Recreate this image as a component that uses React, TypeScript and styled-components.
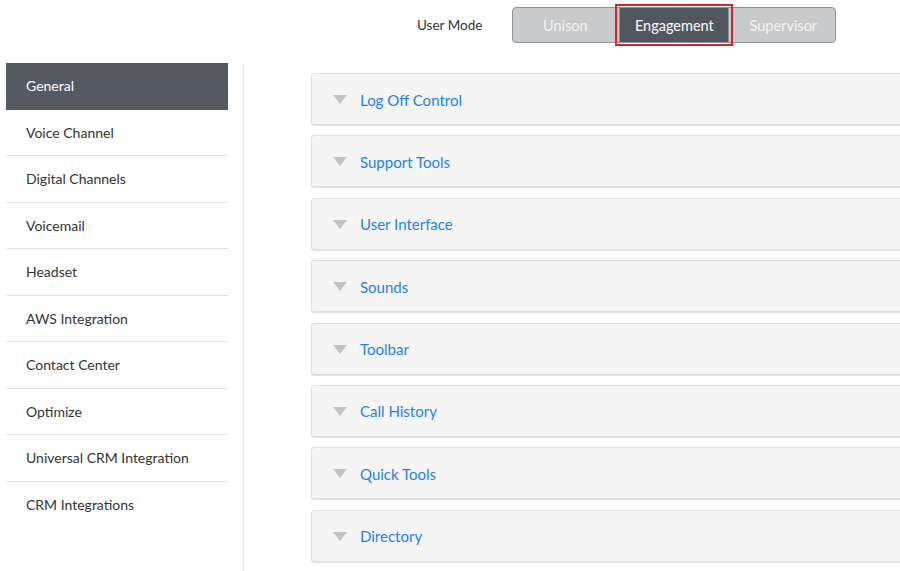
import React from 'react';
import styled, { createGlobalStyle } from 'styled-components';

const GlobalStyle = createGlobalStyle`
  html, body {
    margin: 0;
    padding: 0;
    background: #ffffff;
    overflow: hidden;
  }
  body {
    font-family: Lato, "Open Sans", "Liberation Sans", sans-serif;
  }
`;

const StyledPage = styled.div`
  width: 900px;
  height: 571px;
  overflow: hidden;
  display: flex;
  flex-direction: column;
`;
const StyledHeader = styled.div`
  height: 63px;
  box-sizing: border-box;
  padding: 7px 0 0 417px;
  display: flex;
  align-items: flex-start;
`;
const StyledModeLabel = styled.span`
  font-size: 13.5px;
  line-height: 36px;
  color: #333333;
  margin-right: 30px;
`;
const StyledSegments = styled.div`
  display: flex;
  height: 36px;
  border: 1px solid #8f9499;
  border-radius: 4px;
  box-sizing: border-box;
  background: #c9cacb;
`;
const StyledSegment = styled.button<{ $active?: boolean }>`
  position: relative;
  width: ${(p) => (p.$active ? '110px' : '104px')};
  border: none;
  margin: 0 1px;
  padding: 0;
  font-family: inherit;
  font-size: 14.5px;
  color: ${(p) => (p.$active ? '#ffffff' : '#f4f4f4')};
  background: ${(p) => (p.$active ? '#51575e' : 'transparent')};
  border-left: ${(p) => (p.$active ? '1px solid #8f9499' : 'none')};
  border-right: ${(p) => (p.$active ? '1px solid #8f9499' : 'none')};
  outline: ${(p) => (p.$active ? '2px solid #d62229' : 'none')};
  outline-offset: 2px;
  &:first-child {
    margin-left: 0;
    border-radius: 3px 0 0 3px;
  }
  &:last-child {
    margin-right: 0;
    border-radius: 0 3px 3px 0;
  }
`;
const StyledBody = styled.div`
  flex: 1;
  display: flex;
  min-height: 0;
`;
const StyledSidebar = styled.div`
  width: 244px;
  flex: none;
  box-sizing: border-box;
  padding-left: 6px;
  border-right: 1px solid #e6e6e6;
`;
const StyledNav = styled.ul`
  list-style: none;
  margin: 0;
  padding: 0;
  width: 222px;
`;
const StyledNavItem = styled.li<{ $active?: boolean }>`
  height: 46.5px;
  box-sizing: border-box;
  display: flex;
  align-items: center;
  padding-left: 20px;
  font-size: 14px;
  color: ${(p) => (p.$active ? '#ffffff' : '#333333')};
  background: ${(p) => (p.$active ? '#545a61' : 'transparent')};
  border-bottom: 1px solid ${(p) => (p.$active ? 'transparent' : '#e3e3e3')};
  &:last-child {
    border-bottom: none;
  }
`;
const StyledContent = styled.div`
  flex: 1;
  padding: 10px 0 0 67px;
  display: flex;
  flex-direction: column;
  gap: 10.4px;
`;
const StyledPanel = styled.div`
  width: 700px;
  height: 52px;
  flex: none;
  box-sizing: border-box;
  display: flex;
  align-items: center;
  padding-left: 21px;
  padding-top: 1px;
  background: #f5f5f5;
  border: 1px solid #dddddd;
  border-radius: 3px;
  box-shadow: 0 1px 1px rgba(0, 0, 0, 0.12);
`;
const StyledCaret = styled.span`
  width: 0;
  height: 0;
  border-left: 7px solid transparent;
  border-right: 7px solid transparent;
  border-top: 9px solid #c2c2c2;
  margin-right: 13px;
`;
const StyledPanelTitle = styled.span`
  font-size: 15px;
  color: #1a84ee;
`;

const navItems = [
  'General',
  'Voice Channel',
  'Digital Channels',
  'Voicemail',
  'Headset',
  'AWS Integration',
  'Contact Center',
  'Optimize',
  'Universal CRM Integration',
  'CRM Integrations',
];

const panels = [
  'Log Off Control',
  'Support Tools',
  'User Interface',
  'Sounds',
  'Toolbar',
  'Call History',
  'Quick Tools',
  'Directory',
];

const App = () => {
  return (
    <>
      <GlobalStyle />
      <StyledPage>
        <StyledHeader>
          <StyledModeLabel>User Mode</StyledModeLabel>
          <StyledSegments>
            <StyledSegment>Unison</StyledSegment>
            <StyledSegment $active>Engagement</StyledSegment>
            <StyledSegment>Supervisor</StyledSegment>
          </StyledSegments>
        </StyledHeader>
        <StyledBody>
          <StyledSidebar>
            <StyledNav>
              {navItems.map((item, i) => (
                <StyledNavItem key={item} $active={i === 0}>
                  {item}
                </StyledNavItem>
              ))}
            </StyledNav>
          </StyledSidebar>
          <StyledContent>
            {panels.map((title) => (
              <StyledPanel key={title}>
                <StyledCaret />
                <StyledPanelTitle>{title}</StyledPanelTitle>
              </StyledPanel>
            ))}
          </StyledContent>
        </StyledBody>
      </StyledPage>
    </>
  );
};

export default App;
